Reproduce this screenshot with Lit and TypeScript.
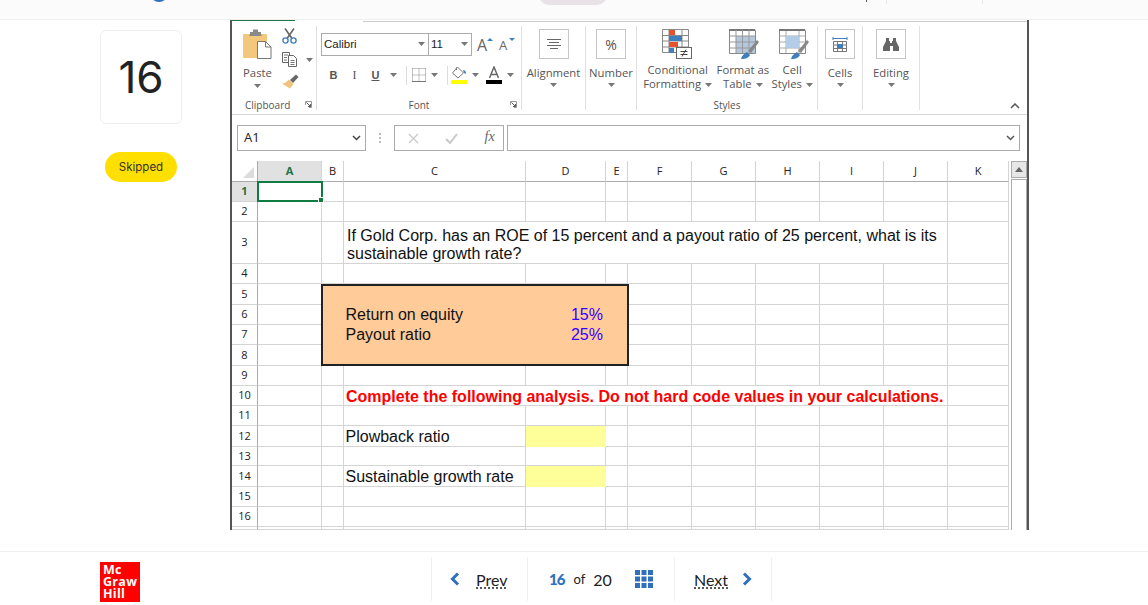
import { LitElement, html, svg, css } from 'lit'
import { customElement } from 'lit/decorators.js'

const COLS = ['A', 'B', 'C', 'D', 'E', 'F', 'G', 'H', 'I', 'J', 'K']
const ROW_COUNT = 17

const caret = html`<svg class="caret" width="7" height="4" viewBox="0 0 7 4"><path d="M0 0h7L3.500 4z" fill="#777" /></svg>`
const launcher = html`<svg class="launcher" width="7" height="7" viewBox="0 0 7 7"><path d="M.5 4V.5H6.500V6.500H4" fill="none" stroke="#999" /><path d="M1.500 1.500L5.500 5.500M3 5.500h2.500V3" fill="none" stroke="#555" /></svg>`

const pasteIcon = html`<svg width="29" height="30" viewBox="0 0 29 30">
  <rect x="0" y="5" width="24" height="24" rx="1" fill="#f3c87d" />
  <path d="M7 5V3h3V.5h5V3h3v2l1 2H6z" fill="#8a8a8a" />
  <path d="M14.500 12.500h8l5.500 5.500v11.500H14.500z" fill="#fff" stroke="#777" />
  <path d="M22.500 12.500V18H28" fill="none" stroke="#777" />
</svg>`
const scissorsIcon = html`<svg width="15" height="16" viewBox="0 0 15 16">
  <path d="M3 .5l7 10M12 .5L5 10.500" stroke="#666" stroke-width="1.600" fill="none" />
  <circle cx="3.500" cy="12.500" r="2.600" fill="none" stroke="#3f7fbf" stroke-width="1.400" />
  <circle cx="11.500" cy="12.500" r="2.600" fill="none" stroke="#3f7fbf" stroke-width="1.400" />
</svg>`
const copyIcon = html`<svg width="16" height="15" viewBox="0 0 16 15">
  <path d="M.5.500h7v10h-7z" fill="#fff" stroke="#666" />
  <path d="M6.500 3.500h5l3 3v8h-8z" fill="#fff" stroke="#666" />
  <path d="M2 3h4M2 5.500h3M2 8h3M8.500 8.500h4M8.500 10.500h4M8.500 12.500h4" stroke="#777" />
</svg>`
const brushIcon = html`<svg width="17" height="15" viewBox="0 0 17 15">
  <path d="M8 6l6-5.500 2.500 2.500L11 9z" fill="#666" />
  <path d="M7 5.500l4.500 4.500L8 14.500 0 9.500l3 -.5z" fill="#f0c27a" />
</svg>`
const borderIcon = html`<svg width="14" height="14" viewBox="0 0 14 14">
  <path d="M.5.500h13M.5 7h13M.5 .5v13M7 .5v13M13.500 .5v13" stroke="#888" stroke-dasharray="1 1" fill="none" />
  <path d="M0 13.500h14" stroke="#777" />
</svg>`
const fillIcon = html`<svg class="fill-ic" width="16" height="18" viewBox="0 0 16 18">
  <path d="M6.500 1l6 6-5.500 5L1.500 7z" fill="#fff" stroke="#777" />
  <path d="M5.500 1.500V4" stroke="#777" />
  <path d="M12 4c2 0 3 1.500 3 4l-2-1z" fill="#3f7fbf" />
  <rect x="0" y="14" width="16" height="4" fill="#ffff00" />
</svg>`
const colorIcon = html`<svg width="16" height="18" viewBox="0 0 16 18">
  <path d="M3.500 12L8 1l4.500 11M5 8.500h6" fill="none" stroke="#666" stroke-width="1.500" />
  <rect x="0" y="14" width="16" height="4" fill="#000" />
</svg>`
const alignIcon = html`<svg width="14" height="11" viewBox="0 0 14 11"><path d="M0 .5h14M2 3.500h10M0 6.500h14M3 9.500h8" stroke="#666" /></svg>`
const tableBrush = svg`<path d="M12 30c1-4 4-6 6-7l3 3c-1 2-3 4-9 4z" fill="#3f7fbf" /><path d="M19 22L28 11l2 2-8 11z" fill="#888" />`
const condIcon = html`<svg width="31" height="31" viewBox="0 0 31 31">
  <path d="M.5.500h26v23H.5zM.5 6.500h26M.5 12h26M.5 18h26M7 .5v23M20 .5v23" fill="#fff" stroke="#888" />
  <rect x="7" y="1" width="6" height="5" fill="#e8512d" />
  <rect x="7" y="7" width="13" height="5" fill="#3f7fbf" />
  <rect x="7" y="13" width="9" height="5" fill="#e8512d" />
  <rect x="7" y="19" width="5" height="5" fill="#3f7fbf" />
  <rect x="14.500" y="18.500" width="15" height="11" fill="#fff" stroke="#666" />
  <path d="M18.500 22.500h7M18.500 25.500h7M24 20.500l-4 7" stroke="#444" fill="none" />
</svg>`
const tableIcon = html`<svg width="30" height="31" viewBox="0 0 30 31">
  <path d="M.5 1.500h26v23H.5z" fill="#fff" stroke="#888" />
  <rect x="7" y="7" width="19" height="17" fill="#b4c7dc" />
  <rect x="0" y="0" width="26" height="2" fill="#777" />
  <path d="M.5 7h26M.5 13h26M.5 19h26M7 1v23M13.500 1v23M20 1v23" stroke="#999" fill="none" />
  ${tableBrush}
</svg>`
const stylesIcon = html`<svg width="30" height="31" viewBox="0 0 30 31">
  <path d="M.5 1.500h26v23H.5z" fill="#fff" stroke="#888" />
  <path d="M.5 7h26M.5 13h26M.5 19h26M7 1v23M20 1v23" stroke="#aaa" fill="none" />
  <rect x="7" y="7" width="13" height="12" fill="#b4cde6" />
  <rect x="0" y="0" width="26" height="2" fill="#777" />
  ${tableBrush}
</svg>`
const cellsIcon = html`<svg width="16" height="16" viewBox="0 0 16 16">
  <path d="M1 2.500h14M1 1v3M15 1v3" stroke="#3f7fbf" fill="none" />
  <path d="M1.500 5.500h13v10h-13zM1.500 9h13M1.500 12.500h13M5.500 5.500v10M10.500 5.500v10" stroke="#777" fill="none" />
  <rect x="5" y="8" width="6" height="4" fill="#3f7fbf" />
</svg>`
const binocularsIcon = html`<svg width="16" height="13" viewBox="0 0 16 13">
  <path d="M3 0h3v3h1v2h2V3h1V0h3v3l3 6v4h-6V8H7v5H0V9l3-6z" fill="#666" />
</svg>`

@customElement('app-root')
export class AppRoot extends LitElement {
  renderGrid() {
    const rows = []
    for (let r = 1; r <= ROW_COUNT; r++) {
      rows.push(html`<div class="rh ${r === 1 ? 'on' : ''}" style="grid-area:${r + 1}/1">${r === ROW_COUNT ? '' : r}</div>`)
      COLS.forEach((c, i) => rows.push(html`<div class="cell" style="grid-area:${r + 1}/${i + 2}"></div>`))
    }
    return html`
      <div class="grid">
        <div class="corner"><svg width="11" height="11" viewBox="0 0 11 11"><path d="M11 0v11H0z" fill="#dcdcdc" /></svg></div>
        ${COLS.map(c => html`<div class="ch ${c === 'A' ? 'on' : ''}">${c}</div>`)}
        ${rows}
        <div class="sel"></div>
        <div class="txt question">If Gold Corp. has an ROE of 15 percent and a payout ratio of 25 percent, what is its sustainable growth rate?</div>
        <div class="box"></div>
        <div class="txt roe">Return on equity</div>
        <div class="txt val roe-val">15%</div>
        <div class="txt payout">Payout ratio</div>
        <div class="txt val payout-val">25%</div>
        <div class="txt red">Complete the following analysis. Do not hard code values in your calculations.</div>
        <div class="txt plow">Plowback ratio</div>
        <div class="input in-a"></div>
        <div class="txt growth">Sustainable growth rate</div>
        <div class="input in-b"></div>
      </div>`
  }

  renderRibbon() {
    return html`
      <div class="ribbon">
        <section class="group clip">
          <div class="body clip-body">
            <div class="large paste">${pasteIcon}<span class="lab">Paste</span>${caret}</div>
            <div class="small-col">
              ${scissorsIcon}
              <div class="copy">${copyIcon}${caret}</div>
              ${brushIcon}
            </div>
          </div>
          <footer>Clipboard ${launcher}</footer>
        </section>
        <section class="group font">
          <div class="body font-body">
            <div class="font-row">
              <div class="select fam"><span>Calibri</span>${caret}</div>
              <div class="select size"><span>11</span>${caret}</div>
              <span class="grow">A<i class="up"></i></span>
              <span class="grow less">A<i class="down"></i></span>
            </div>
            <div class="font-row tools">
              <b class="t">B</b><em class="t i">I</em><span class="t u">U</span>${caret}
              <span class="vsep"></span>
              ${borderIcon}${caret}
              <span class="vsep"></span>
              ${fillIcon}${caret}
              <span class="pick">${colorIcon}</span>${caret}
            </div>
          </div>
          <footer>Font ${launcher}</footer>
        </section>
        <section class="group w64">
          <div class="body btn"><div class="ico">${alignIcon}</div><span class="lab">Alignment</span>${caret}</div>
          <footer></footer>
        </section>
        <section class="group w51">
          <div class="body btn"><div class="ico pct">%</div><span class="lab">Number</span>${caret}</div>
          <footer></footer>
        </section>
        <section class="group styles">
          <div class="body styles-body">
            <div class="large cond">${condIcon}<span class="lab two">Conditional<br />Formatting ${caret}</span></div>
            <div class="large tbl">${tableIcon}<span class="lab two">Format as<br />Table ${caret}</span></div>
            <div class="large cst">${stylesIcon}<span class="lab two">Cell<br />Styles ${caret}</span></div>
          </div>
          <footer>Styles</footer>
        </section>
        <section class="group w45">
          <div class="body btn"><div class="ico">${cellsIcon}</div><span class="lab">Cells</span>${caret}</div>
          <footer></footer>
        </section>
        <section class="group w57">
          <div class="body btn"><div class="ico">${binocularsIcon}</div><span class="lab">Editing</span>${caret}</div>
          <footer></footer>
        </section>
        <div class="collapse">
          <svg width="10" height="6" viewBox="0 0 10 6"><path d="M1 5l4-4 4 4" fill="none" stroke="#555" stroke-width="1.500" /></svg>
        </div>
      </div>`
  }

  render() {
    return html`
      <header class="top">
        <span class="dot"></span>
        <span class="pill"></span>
        <span class="tick"></span>
        <span class="bar first"></span>
        <span class="bar second"></span>
      </header>
      <main class="main">
        <aside class="side">
          <div class="num">16</div>
          <div class="skipped">Skipped</div>
        </aside>
        <div class="sheet">
          <div class="tabline"><span class="green"></span><span class="blank"></span><span class="gray"></span></div>
          ${this.renderRibbon()}
          <div class="formula">
            <div class="name"><span>A1</span><svg width="9" height="6" viewBox="0 0 9 6"><path d="M1 1l3.500 3.500L8 1" fill="none" stroke="#444" stroke-width="1.500" /></svg></div>
            <div class="dots"></div>
            <div class="fx-box">
              <svg width="11" height="11" viewBox="0 0 11 11"><path d="M1 1l9 9M10 1l-9 9" stroke="#c8c8c8" stroke-width="1.300" /></svg>
              <svg width="13" height="11" viewBox="0 0 13 11"><path d="M1 6l4 4 7-9" fill="none" stroke="#c8c8c8" stroke-width="2" /></svg>
              <span class="fx">fx</span>
            </div>
            <div class="entry"><svg width="9" height="6" viewBox="0 0 9 6"><path d="M1 1l3.500 3.500L8 1" fill="none" stroke="#555" stroke-width="1.500" /></svg></div>
          </div>
          <div class="work">
            ${this.renderGrid()}
            <div class="scroll">
              <div class="up-btn"><svg width="8" height="5" viewBox="0 0 8 5"><path d="M0 5l4-5 4 5z" fill="#666" /></svg></div>
              <div class="track"></div>
            </div>
          </div>
        </div>
      </main>
      <footer class="foot">
        <div class="logo">Mc<br />Graw<br />Hill</div>
        <nav class="pager">
          <a class="prev">
            <svg width="10" height="14" viewBox="0 0 10 14"><path d="M8 1.500L2.500 7 8 12.500" fill="none" stroke="#2f6fbd" stroke-width="3" /></svg>
            <span class="link">Prev</span>
          </a>
          <div class="count">
            <b>16</b><span class="of">of</span><span class="tot">20</span>
            <svg width="18" height="18" viewBox="0 0 18 18" fill="#2f6fbd">
              <rect x="0" y="0" width="5" height="5" /><rect x="6.500" y="0" width="5" height="5" /><rect x="13" y="0" width="5" height="5" />
              <rect x="0" y="6.500" width="5" height="5" /><rect x="6.500" y="6.500" width="5" height="5" /><rect x="13" y="6.500" width="5" height="5" />
              <rect x="0" y="13" width="5" height="5" /><rect x="6.500" y="13" width="5" height="5" /><rect x="13" y="13" width="5" height="5" />
            </svg>
          </div>
          <a class="next">
            <span class="link">Next</span>
            <svg width="10" height="14" viewBox="0 0 10 14"><path d="M2 1.500L7.500 7 2 12.500" fill="none" stroke="#2f6fbd" stroke-width="3" /></svg>
          </a>
        </nav>
      </footer>
    `
  }

  static styles = css`
    :host {
      display: flex;
      flex-direction: column;
      width: 1148px;
      height: 605px;
      overflow: hidden;
      background: #fff;
      font-family: 'Open Sans', sans-serif;
    }

    /* top bar, mostly scrolled away */
    .top {
      flex: none;
      height: 19px;
      background: #fbfbfb;
      border-bottom: 1px solid #efefef;
      display: flex;
      align-items: flex-start;
      overflow: hidden;
    }
    .dot {
      width: 18px;
      height: 18px;
      margin: -16px 0 0 150px;
      border-radius: 50%;
      background: #2f6fbd;
    }
    .pill {
      width: 68px;
      height: 20px;
      margin: -15px 0 0 371px;
      border-radius: 10px;
      background: #e8e2e6;
    }
    .tick {
      width: 1px;
      height: 2px;
      margin-left: 259px;
      background: #555;
    }
    .bar {
      width: 1px;
      height: 4px;
      background: #e6e6e6;
    }
    .bar.first {
      margin-left: 19px;
    }
    .bar.second {
      margin-left: 95px;
    }

    .main {
      flex: none;
      height: 531px;
      display: flex;
      align-items: flex-start;
    }
    .side {
      width: 82px;
      margin-left: 100px;
      padding-top: 10px;
      display: flex;
      flex-direction: column;
      align-items: center;
    }
    .num {
      width: 82px;
      height: 94px;
      box-sizing: border-box;
      border: 1px solid #eeeeee;
      border-radius: 6px;
      display: flex;
      align-items: center;
      justify-content: center;
      font: 400 44px Inter, sans-serif;
      color: #222;
    }
    .skipped {
      width: 72px;
      height: 30px;
      margin-top: 28px;
      border-radius: 15px;
      background: #ffdf00;
      display: flex;
      align-items: center;
      justify-content: center;
      font: 400 11.500px Inter, sans-serif;
      color: #333;
    }

    .sheet {
      width: 799px;
      height: 510px;
      margin-left: 48px;
      box-sizing: border-box;
      border-left: 2px solid #555;
      border-right: 2px solid #555;
      display: flex;
      flex-direction: column;
      overflow: hidden;
    }
    .tabline {
      flex: none;
      height: 2px;
      display: flex;
    }
    .green {
      width: 63px;
      height: 1px;
      background: #217346;
    }
    .blank {
      width: 68px;
    }
    .gray {
      flex: 1;
      height: 1px;
      margin-top: 1px;
      background: #ccc;
    }

    .ribbon {
      flex: none;
      height: 92px;
      display: flex;
      border-bottom: 1px solid #d8d8d8;
      color: #555;
      font-size: 11.300px;
    }
    .group {
      display: flex;
      flex-direction: column;
      box-sizing: border-box;
      height: 84px;
      margin-top: 4px;
      border-right: 1px solid #e1e1e1;
    }
    .body {
      height: 74px;
    }
    .group footer {
      display: flex;
      justify-content: center;
      align-items: center;
      height: 10px;
      padding-top: 2px;
      font-size: 10px;
      position: relative;
    }
    .launcher {
      position: absolute;
      right: 4px;
      top: 3px;
    }
    .lab {
      line-height: 14px;
      white-space: nowrap;
    }
    .caret {
      display: inline-block;
    }
    .clip {
      width: 85px;
    }
    .clip footer {
      justify-content: flex-start;
      padding-left: 13px;
    }
    .clip-body {
      display: flex;
    }
    .large {
      display: flex;
      flex-direction: column;
      align-items: center;
    }
    .paste {
      width: 29px;
      margin: 3px 0 0 11px;
    }
    .paste .lab {
      margin-top: 7px;
    }
    .paste .caret {
      margin-top: 4px;
    }
    .small-col {
      display: flex;
      flex-direction: column;
      align-items: flex-start;
      margin: 2px 0 0 10px;
    }
    .copy {
      display: flex;
      align-items: center;
      gap: 8px;
      margin: 8px 0 7px;
    }

    .font {
      width: 205px;
    }
    .font-body {
      padding: 7px 0 0 4px;
      box-sizing: border-box;
    }
    .font-row {
      display: flex;
      align-items: center;
    }
    .select {
      height: 23px;
      box-sizing: border-box;
      border: 1px solid #ababab;
      display: flex;
      align-items: center;
      justify-content: space-between;
      padding: 0 3px 1px 2px;
      font: 11.500px 'Liberation Sans', sans-serif;
      color: #222;
    }
    .fam {
      width: 108px;
    }
    .size {
      width: 44px;
      margin-left: -1px;
    }
    .grow {
      position: relative;
      margin-left: 5px;
      width: 17px;
      font-size: 16px;
      line-height: 20px;
      color: #666;
    }
    .grow.less {
      font-size: 13px;
      margin-left: 5px;
    }
    .grow i {
      position: absolute;
      right: 1px;
      top: 3px;
      border-left: 3px solid transparent;
      border-right: 3px solid transparent;
    }
    .grow .up {
      border-bottom: 3px solid #3f7fbf;
    }
    .grow .down {
      border-top: 3px solid #3f7fbf;
    }
    .tools {
      margin-top: 9px;
      height: 20px;
      padding-left: 8px;
    }
    .t {
      width: 9px;
      font: 700 11px 'Liberation Sans', sans-serif;
      color: #555;
      text-align: center;
      margin-right: 12px;
    }
    .t.i {
      font-weight: 400;
      font-family: 'Liberation Serif', serif;
      font-size: 12px;
    }
    .t.u {
      text-decoration: underline;
      margin-right: 10px;
    }
    .vsep {
      width: 1px;
      height: 19px;
      background: #ddd;
      margin: 0 5px 0 9px;
    }
    .tools svg:not(.caret) {
      margin-right: 5px;
    }
    .tools .fill-ic {
      margin-left: -2px;
    }
    .pick {
      display: flex;
      margin: 0 0 0 7px;
    }

    .btn {
      display: flex;
      flex-direction: column;
      align-items: center;
      padding-top: 3px;
      box-sizing: border-box;
    }
    .btn .lab {
      margin-top: 7px;
    }
    .btn .caret {
      margin-top: 3px;
    }
    .ico {
      width: 30px;
      height: 30px;
      box-sizing: border-box;
      border: 1px solid #c6c6c6;
      display: flex;
      align-items: center;
      justify-content: center;
    }
    .pct {
      font-size: 14px;
      color: #555;
    }
    .w64 {
      width: 64px;
    }
    .w51 {
      width: 51px;
    }
    .w45 {
      width: 45px;
    }
    .w57 {
      width: 57px;
    }
    .styles {
      width: 181px;
    }
    .styles-body {
      display: flex;
      padding-top: 3px;
      box-sizing: border-box;
    }
    .two {
      text-align: center;
      margin-top: 3px;
    }
    .two .caret {
      vertical-align: middle;
      margin-left: 1px;
    }
    .cond {
      width: 82px;
    }
    .tbl {
      width: 49px;
    }
    .cst {
      width: 50px;
    }
    .tbl > svg,
    .cst > svg {
      margin-left: 3px;
    }
    .collapse {
      flex: 1;
      display: flex;
      justify-content: flex-end;
      align-items: flex-end;
      padding: 0 7px 5px 0;
    }

    .formula {
      flex: none;
      height: 46px;
      box-sizing: border-box;
      padding: 10px 7px 10px 5px;
      display: flex;
      color: #222;
    }
    .name,
    .fx-box,
    .entry {
      box-sizing: border-box;
      height: 26px;
      border: 1px solid #ababab;
      display: flex;
      align-items: center;
    }
    .name {
      width: 129px;
      justify-content: space-between;
      padding: 0 4px 0 6px;
      font-size: 13px;
    }
    .name span {
      margin-top: -3px;
    }
    .dots {
      width: 2px;
      height: 10px;
      margin: 8px 13px;
      background: repeating-linear-gradient(#bbb 0 2px, transparent 2px 4px);
    }
    .fx-box {
      width: 110px;
      padding: 0 8px 0 13px;
      justify-content: space-between;
    }
    .fx {
      font: italic 14px 'Liberation Serif', serif;
      color: #666;
      margin-top: -3px;
    }
    .entry {
      width: 514px;
      margin-left: 3px;
      justify-content: flex-end;
      padding-right: 4px;
    }

    .work {
      flex: 1;
      min-height: 0;
      display: flex;
      overflow: hidden;
    }
    .grid {
      display: grid;
      grid-template-columns: 26px 64px 22px 182px 80px 22px 64px 64px 64px 64px 64px 61px;
      grid-template-rows: 21px 20px 20px 42px 20px 21px 20px 20px 21px 20px 20px 20px 21px 19px 21px 20px 20px 3px;
      height: 369px;
      color: #222;
      font: 400 11px 'Open Sans', sans-serif;
    }
    .corner,
    .ch,
    .rh,
    .cell {
      box-sizing: border-box;
    }
    .corner {
      display: flex;
      align-items: flex-end;
      justify-content: flex-end;
      padding: 0 3px 3px 0;
      border-right: 1px solid #ababab;
      border-bottom: 1px solid #ababab;
    }
    .ch {
      display: flex;
      align-items: center;
      justify-content: center;
      padding-bottom: 2px;
      border-right: 1px solid #d4d4d4;
      border-bottom: 1px solid #ababab;
    }
    .rh {
      display: flex;
      align-items: center;
      justify-content: center;
      padding-bottom: 2px;
      overflow: hidden;
      border-right: 1px solid #ababab;
      border-bottom: 1px solid #d4d4d4;
    }
    .on {
      background: #e1e1e1;
      color: #217346;
      font-weight: 700;
    }
    .cell {
      border-right: 1px solid #d4d4d4;
      border-bottom: 1px solid #d4d4d4;
    }
    .sel {
      grid-area: 2 / 2 / 3 / 3;
      position: relative;
      box-sizing: border-box;
      margin: -1px -1px 0 -1px;
      border: 2px solid #107c41;
    }
    .sel::after {
      content: '';
      position: absolute;
      right: -3px;
      bottom: -3px;
      width: 4px;
      height: 4px;
      background: #107c41;
      border: 0.500px solid #fff;
    }
    .txt {
      font: 400 16px/18px 'Liberation Sans', sans-serif;
      color: #111;
      display: flex;
      align-items: center;
      padding-left: 1.500px;
      white-space: nowrap;
    }
    /* long text runs over the grid lines of the cells it spans */
    .question {
      grid-area: 4 / 4 / 5 / 12;
      white-space: normal;
      margin: 0 1px 1px 0;
      padding: 5px 8px 0 3px;
      background: #fff;
    }
    .box {
      grid-area: 6 / 3 / 10 / 7;
      box-sizing: border-box;
      margin: 0 -1px 0 -1px;
      background: #ffcc99;
      border: 2px solid #222;
    }
    .roe {
      grid-area: 7 / 4 / 8 / 5;
    }
    .payout {
      grid-area: 8 / 4 / 9 / 5;
    }
    .val {
      justify-content: flex-end;
      padding: 0 3px 0 0;
      color: #3300ff;
    }
    .roe-val {
      grid-area: 7 / 5 / 8 / 6;
    }
    .payout-val {
      grid-area: 8 / 5 / 9 / 6;
    }
    .red {
      grid-area: 11 / 4 / 12 / 12;
      color: #ff0000;
      font-weight: 700;
      margin: 0 1px 1px 0;
      padding: 3px 0 0 2px;
      background: #fff;
    }
    .plow {
      grid-area: 13 / 4 / 14 / 5;
    }
    .growth {
      grid-area: 15 / 4 / 16 / 5;
    }
    .input {
      background: #ffff99;
    }
    .in-a {
      grid-area: 13 / 5 / 14 / 6;
    }
    .in-b {
      grid-area: 15 / 5 / 16 / 6;
    }
    .scroll {
      width: 17px;
      margin-left: 2px;
      display: flex;
      flex-direction: column;
      gap: 1px;
    }
    .up-btn {
      height: 17px;
      box-sizing: border-box;
      border: 1px solid #ababab;
      background: #e6e6e6;
      display: flex;
      align-items: center;
      justify-content: center;
    }
    .track {
      flex: 1;
      border: 1px solid #ababab;
      border-bottom: 0;
    }

    .foot {
      flex: 1;
      border-top: 1px solid #f0f0f0;
      display: flex;
      align-items: flex-start;
      color: #222;
      font: 400 16px Lato, sans-serif;
    }
    .logo {
      width: 40px;
      height: 40px;
      box-sizing: border-box;
      margin: 10px 0 0 100px;
      padding: 2px 0 0 3px;
      background: #ff0000;
      color: #fff;
      font: 700 12.500px/12px 'Open Sans', sans-serif;
      letter-spacing: 0.300px;
    }
    .pager {
      display: flex;
      height: 44px;
      margin: 5px 0 0 291px;
      border-left: 1px solid #f0f0f0;
    }
    .pager > * {
      box-sizing: border-box;
      display: flex;
      align-items: center;
      border-right: 1px solid #f0f0f0;
    }
    .prev {
      width: 96px;
      padding-left: 18px;
      gap: 16px;
    }
    .next {
      width: 97px;
      padding-left: 19px;
      gap: 14px;
    }
    .link {
      text-decoration: underline dotted;
      text-underline-offset: 2px;
    }
    .count {
      width: 147px;
      padding-left: 21px;
    }
    .count b {
      color: #2f6fbd;
      font-size: 15px;
      font-weight: 900;
      letter-spacing: -1px;
    }
    .of {
      margin-left: 9px;
      font-size: 13px;
    }
    .tot {
      margin-left: 8px;
    }
    .count svg {
      margin-left: 23px;
    }
  `
}
